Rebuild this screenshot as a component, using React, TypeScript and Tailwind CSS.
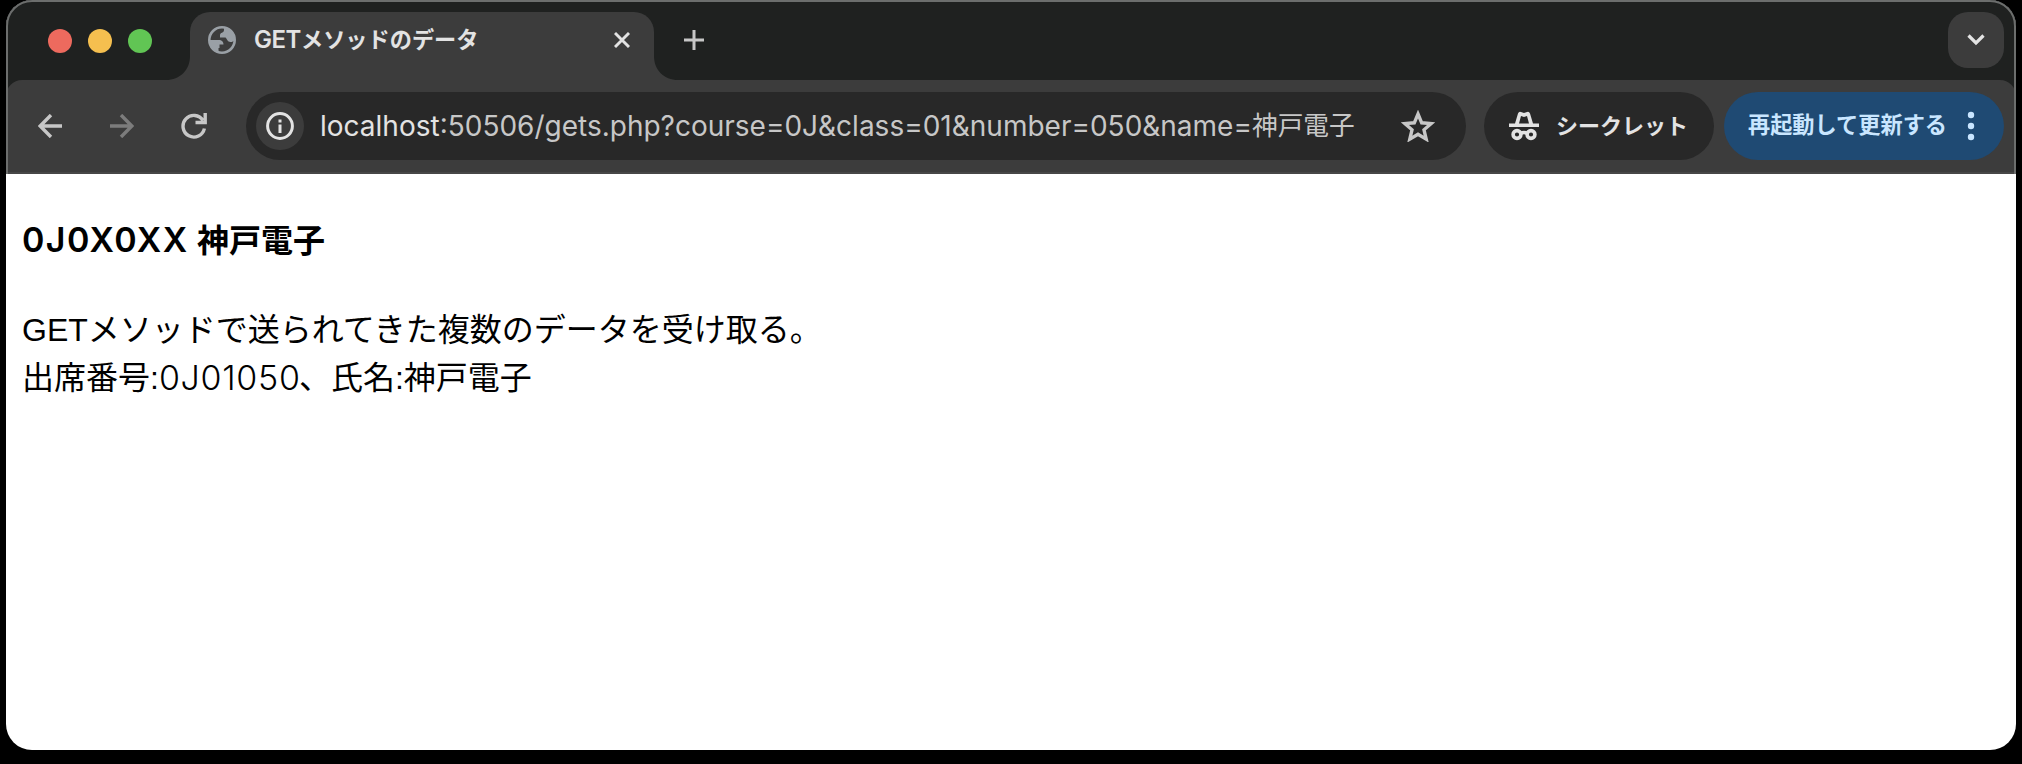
import React from "react";

function Tab() {
  return (
    <div className="relative mt-3 flex h-[68px] w-[464px] items-start rounded-t-[20px] bg-[#3c3c3c]">
      <svg className="absolute bottom-0 -left-6 h-6 w-6" viewBox="0 0 24 24"><path d="M24 0v24H0C14 24 24 14 24 0z" fill="#3c3c3c" /></svg>
      <svg className="absolute -right-6 bottom-0 h-6 w-6" viewBox="0 0 24 24"><path d="M0 0v24h24C10 24 0 14 0 0z" fill="#3c3c3c" /></svg>
      <div className="flex h-14 w-full items-center pl-[18px]">
        <svg className="h-7 w-7 shrink-0" viewBox="0 0 28 28">
          <circle cx="14" cy="14" r="12.700" fill="none" stroke="#9aa0a6" strokeWidth="2.600" />
          <path d="M1 14h9.500c3.500 0 5 2 5 4.500h-4V22H10.500v5C4 25 1 20 1 14zM16 1c6 1 11 6 11 13-1.500 1.500-3 2-4.500 2-3 0-3.500-3-5-4.500h-5.500V9c0-2.500 4-2 4-5z" fill="#9aa0a6" />
        </svg>
        <div className="ml-[18px] flex items-center whitespace-nowrap font-['Inter'] text-[24px] font-semibold text-[#e3e3e3]">
          <span className="w-[47px] tracking-[-0.500px]">GET</span>
          <span className="-mt-[3px] font-['Noto_Sans_CJK_JP'] text-[22.200px] font-bold">メソッドのデータ</span>
        </div>
        <svg className="mr-[24px] ml-auto h-4 w-4" viewBox="0 0 16 16"><path d="M1 1l14 14M15 1L1 15" stroke="#e3e3e3" strokeWidth="2.900" /></svg>
      </div>
    </div>
  );
}

function TabStrip() {
  return (
    <div className="flex h-20 shrink-0 bg-[#1f2120]">
      <div className="flex h-[82px] w-[184px] shrink-0 items-center gap-4 pl-[42px]">
        <span className="h-6 w-6 rounded-full bg-[#ed6a5e]" />
        <span className="h-6 w-6 rounded-full bg-[#f5bf4f]" />
        <span className="h-6 w-6 rounded-full bg-[#61c554]" />
      </div>
      <Tab />
      <svg className="mt-[30px] ml-[30px] h-5 w-5" viewBox="0 0 20 20"><path d="M10 0v20M0 10h20" stroke="#c7c7c7" strokeWidth="3" /></svg>
      <div className="mt-3 mr-3 ml-auto flex h-14 w-14 items-center justify-center rounded-[20px] bg-[#3c3c3c]">
        <svg className="h-[12px] w-[18px]" viewBox="0 0 18 12"><path d="M1.500 1.500L9 9l7.500-7.500" fill="none" stroke="#e3e3e3" strokeWidth="3.200" /></svg>
      </div>
    </div>
  );
}

function Toolbar() {
  return (
    <div className="bg-[#1f2120]">
      <div className="flex h-[94px] items-start rounded-t-[16px] border-b-2 border-[#474747] bg-[#3c3c3c] pt-3">
        <div className="flex h-[68px] w-[240px] shrink-0 items-center pl-8">
          <svg className="h-6 w-6" viewBox="0 0 24 24"><path d="M24 12H3M13 1L2.200 12 13 23" fill="none" stroke="#c7c7c7" strokeWidth="3.400" /></svg>
          <svg className="ml-12 h-6 w-6" viewBox="0 0 24 24"><path d="M0 12h21M11 1l10.800 11L11 23" fill="none" stroke="#7c7c7c" strokeWidth="3.400" /></svg>
          <svg className="ml-[47px] h-[26px] w-[26px]" viewBox="0 0 26 26"><path d="M23.400 15.500A10.800 10.800 0 1 1 22 7.500M24.200 0v9.500H14.500" fill="none" stroke="#c7c7c7" strokeWidth="3.400" /></svg>
        </div>
        <div className="flex h-[68px] w-[1220px] shrink-0 items-center rounded-full bg-[#282828] pl-[10px]">
          <span className="flex h-12 w-12 shrink-0 items-center justify-center rounded-full bg-[#3c3c3c]">
            <svg className="h-7 w-7" viewBox="0 0 28 28"><circle cx="14" cy="14" r="12.400" fill="none" stroke="#e3e3e3" strokeWidth="3" /><path d="M14 12.500V21M14 7.500v3" stroke="#e3e3e3" strokeWidth="3" /></svg>
          </span>
          <div className="ml-4 flex items-center whitespace-nowrap font-['Inter'] text-[28px] text-[#c7c7c7]">
            <span className="text-[#e3e3e3]">localhost</span>
            <span>:50506/gets.php?course=0J&amp;class=01&amp;number=050&amp;name=</span>
            <span className="-mt-1 font-['Noto_Sans_CJK_JP'] text-[25.700px]">神戸電子</span>
          </div>
          <svg className="mr-[31px] ml-auto h-8 w-[34px] shrink-0" viewBox="0 0 34 32"><path d="M17 4l3.700 8.800 9.500.8-7.200 6.200 2.200 9.300-8.200-4.900-8.200 4.900L11 19.800l-7.200-6.200 9.500-.8z" fill="none" stroke="#c7c7c7" strokeWidth="3.400" /></svg>
        </div>
        <div className="ml-[18px] flex h-[68px] w-[230px] shrink-0 items-center rounded-full bg-[#282828] pl-[25px]">
          <svg className="h-[30px] w-[30px] shrink-0" viewBox="0 0 30 30">
            <path d="M0 12.500h30v3.500H0zM6 12.500L9 2.500Q10 0 12 1l3 1 3-1q2-1 3 1.500l3 10h-4L18 5l-3 1-3-1-2 7.500z" fill="#e3e3e3" />
            <g fill="none" stroke="#e3e3e3" strokeWidth="3.600"><circle cx="8" cy="23.500" r="3.900" /><circle cx="22" cy="23.500" r="3.900" /><path d="M11.500 22.500q3.500-2 7 0" /></g>
          </svg>
          <span className="-mt-1 ml-[17px] whitespace-nowrap font-['Noto_Sans_CJK_JP'] text-[22px] font-bold text-[#e3e3e3]">シークレット</span>
        </div>
        <div className="ml-[10px] flex h-[68px] w-[280px] shrink-0 items-center rounded-full bg-[#1f4a73] pl-6">
          <span className="-mt-1 whitespace-nowrap font-['Noto_Sans_CJK_JP'] text-[22.200px] font-bold text-[#c9e6ff]">再起動して更新する</span>
          <svg className="ml-[21px] h-7 w-[6px] overflow-visible" viewBox="0 0 6 28"><g fill="#c9e6ff"><circle cx="3" cy="3" r="3.200" /><circle cx="3" cy="14" r="3.200" /><circle cx="3" cy="25" r="3.200" /></g></svg>
        </div>
      </div>
    </div>
  );
}

export default function App() {
  return (
    <div className="h-[764px] w-[2022px] overflow-hidden bg-black pl-[6px]">
      <div className="relative flex h-[750px] w-[2010px] flex-col overflow-hidden rounded-[26px] bg-white">
        <TabStrip />
        <Toolbar />
        <main className="flex flex-col pl-4 font-['Liberation_Sans','Noto_Sans_CJK_JP',sans-serif] text-[32px] leading-[48px] text-black">
          <h1 className="mt-[42px] flex whitespace-nowrap font-bold">
            <span className="w-[175px] font-['Inter'] text-[34px] font-semibold tracking-[1.400px]">0J0X0XX</span>
            <span className="-mt-[2px] font-['Noto_Sans_CJK_JP']">神戸電子</span>
          </h1>
          <p className="mt-[42px] whitespace-nowrap">GETメソッドで送られてきた複数のデータを受け取る。</p>
          <p className="flex whitespace-nowrap">
            <span>出席番号:</span>
            <span className="w-[140px] font-['Inter'] text-[34px] font-light tracking-[0.700px]">0J01050</span>
            <span>、氏名:神戸電子</span>
          </p>
        </main>
        <div className="pointer-events-none absolute inset-x-0 top-0 h-[174px] overflow-hidden">
          <div className="h-[300px] rounded-[26px] border-2 border-[#6c6e6d]" />
        </div>
      </div>
    </div>
  );
}
